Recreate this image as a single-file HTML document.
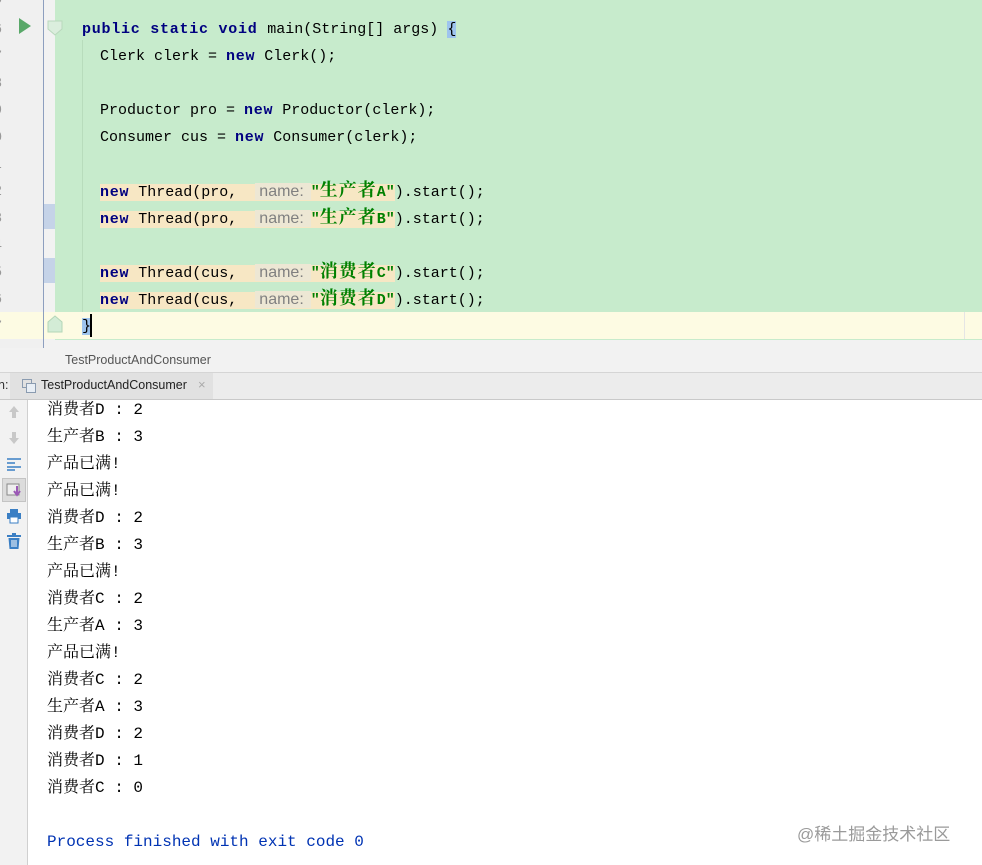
<!DOCTYPE html>
<html><head><meta charset="utf-8"><style>
*{margin:0;padding:0;box-sizing:border-box}
body{width:982px;height:865px;overflow:hidden;background:#fff;position:relative;font-family:"Liberation Mono","Noto Serif CJK SC",monospace}
.a{position:absolute}
.code{font-size:15px;line-height:27px;white-space:pre;color:#000}
.k{color:#000080;font-weight:bold;letter-spacing:0.75px}
.h{background:#f7e7c4}
.n{font-family:"Liberation Sans",sans-serif;color:#808080;background:#ede7d4;font-size:16px;padding:0 7px 0 4px}
.s{color:#008000;font-weight:bold;font-family:"Liberation Mono","Noto Serif CJK SC",monospace}
.s i{font-style:normal;font-size:18px;letter-spacing:1px}
.ln{font-family:"Liberation Sans",sans-serif;font-size:14px;color:#999;left:-6px;width:12px}
.con{font-size:16px;line-height:27px;white-space:pre;color:#000;font-family:"Liberation Mono","Noto Serif CJK SC",monospace}
</style></head><body>
<div class="a" style="left:0;top:0;width:43px;height:348px;background:#f0f0f0"></div>
<div class="a" style="left:43px;top:0;width:1px;height:348px;background:#8d9fbf"></div>
<div class="a" style="left:44px;top:0;width:11px;height:348px;background:#f2f2f2"></div>
<div class="a" style="left:55px;top:0;width:927px;height:340px;background:#c7ebcc"></div>
<div class="a" style="left:55px;top:340px;width:927px;height:8px;background:#f2f2f2"></div>
<div class="a" style="left:44px;top:204px;width:11px;height:25px;background:#c5d3e8"></div>
<div class="a" style="left:44px;top:258px;width:11px;height:25px;background:#c5d3e8"></div>
<div class="a" style="left:55px;top:312px;width:927px;height:27px;background:#fdfbe3"></div>
<div class="a" style="left:964px;top:312px;width:1px;height:27px;background:#e5e5e5"></div>
<div class="a" style="left:0;top:312px;width:55px;height:27px;background:#fdfbe3"></div>
<div class="a" style="left:43px;top:312px;width:1px;height:27px;background:#8d9fbf"></div>
<svg class="a" style="left:18px;top:17px" width="14" height="18"><path d="M1 1 L13 9 L1 17Z" fill="#59a869"/></svg>
<svg class="a" style="left:47px;top:20px" width="16" height="16"><path d="M1 1 H15 V9 L8 15 L1 9Z" fill="#dbeedd" stroke="#b9d8bd"/></svg>
<svg class="a" style="left:47px;top:315px" width="16" height="18"><path d="M1 17 H15 V7 L8 1 L1 7Z" fill="#d3ecd6" stroke="#b3d6b7"/></svg>
<div class="a" style="left:82px;top:40px;width:1px;height:272px;background:#b8dcbc"></div>
<div class="a ln" style="top:-10px">5</div>
<div class="a ln" style="top:20px">6</div><div class="a ln" style="top:47px">7</div><div class="a ln" style="top:74px">8</div><div class="a ln" style="top:101px">9</div><div class="a ln" style="top:128px">0</div><div class="a ln" style="top:155px">1</div><div class="a ln" style="top:182px">2</div><div class="a ln" style="top:209px">3</div><div class="a ln" style="top:236px">4</div><div class="a ln" style="top:263px">5</div><div class="a ln" style="top:290px">6</div><div class="a ln" style="top:317px">7</div>
<div class="a code" style="left:82px;top:16px"><span class="k">public static void </span>main(String[] args) <span style="background:#9ec4ee">{</span></div>
<div class="a code" style="left:100px;top:43px">Clerk clerk = <span class="k">new</span> Clerk();</div>
<div class="a code" style="left:100px;top:97px">Productor pro = <span class="k">new</span> Productor(clerk);</div>
<div class="a code" style="left:100px;top:124px">Consumer cus = <span class="k">new</span> Consumer(clerk);</div>
<div class="a code" style="left:100px;top:178px"><span class="h"><span class="k">new</span> Thread(pro,  <span class="n">name:</span><span class="s">"<i>生产者</i>A"</span></span>).start();</div>
<div class="a code" style="left:100px;top:205px"><span class="h"><span class="k">new</span> Thread(pro,  <span class="n">name:</span><span class="s">"<i>生产者</i>B"</span></span>).start();</div>
<div class="a code" style="left:100px;top:259px"><span class="h"><span class="k">new</span> Thread(cus,  <span class="n">name:</span><span class="s">"<i>消费者</i>C"</span></span>).start();</div>
<div class="a code" style="left:100px;top:286px"><span class="h"><span class="k">new</span> Thread(cus,  <span class="n">name:</span><span class="s">"<i>消费者</i>D"</span></span>).start();</div>
<div class="a code" style="left:82px;top:313px"><span style="background:#9ec4ee">}</span></div>
<div class="a" style="left:90px;top:314px;width:2px;height:23px;background:#000"></div>
<div class="a" style="left:0;top:348px;width:982px;height:25px;background:#f2f2f2;border-bottom:1px solid #d5d5d5"></div>
<div class="a" style="left:65px;top:353px;font:12.5px 'Liberation Sans',sans-serif;color:#555">TestProductAndConsumer</div>
<div class="a" style="left:0;top:373px;width:982px;height:27px;background:#ececec;border-bottom:1px solid #c9c9c9"></div>
<div class="a" style="left:10px;top:373px;width:203px;height:26px;background:#e1e1e1"></div>
<div class="a" style="left:-2px;top:378px;font:12.5px 'Liberation Sans',sans-serif;color:#333">n:</div>
<svg class="a" style="left:22px;top:379px" width="14" height="14"><rect x="0.5" y="0.5" width="9" height="8" fill="none" stroke="#8a9bb0"/><rect x="4.5" y="4.5" width="9" height="9" fill="#e8eef5" stroke="#8a9bb0"/></svg>
<div class="a" style="left:41px;top:378px;font:12.5px 'Liberation Sans',sans-serif;color:#222">TestProductAndConsumer</div>
<div class="a" style="left:198px;top:377px;font:13px 'Liberation Sans',sans-serif;color:#aaa">×</div>
<div class="a" style="left:0;top:400px;width:28px;height:465px;background:#f2f2f2;border-right:1px solid #d0d0d0"></div>
<svg class="a" style="left:7px;top:405px" width="14" height="14"><path d="M7 1 L12 7 H9 V13 H5 V7 H2Z" fill="#c8c8c8"/></svg>
<svg class="a" style="left:7px;top:431px" width="14" height="14"><path d="M7 13 L12 7 H9 V1 H5 V7 H2Z" fill="#c8c8c8"/></svg>
<svg class="a" style="left:6px;top:457px" width="16" height="14"><path d="M1 2H15M1 6H9M1 10H15M1 13H9" stroke="#3b7fc4" stroke-width="1.6"/></svg>
<div class="a" style="left:2px;top:478px;width:24px;height:24px;background:#dcdcdc;border:1px solid #c4c4c4"></div>
<svg class="a" style="left:6px;top:482px" width="16" height="16"><rect x="1" y="2" width="12" height="11" fill="#eee" stroke="#888"/><path d="M11 4V12M8 9L11 13L14 9" stroke="#9b59b6" stroke-width="2" fill="none"/></svg>
<svg class="a" style="left:6px;top:508px" width="16" height="16"><rect x="4" y="1" width="8" height="4" fill="#3b7fc4"/><rect x="1" y="5" width="14" height="6" fill="#3b7fc4"/><rect x="4" y="9" width="8" height="6" fill="#fff" stroke="#3b7fc4"/></svg>
<svg class="a" style="left:6px;top:533px" width="16" height="17"><rect x="1" y="2" width="14" height="2" fill="#3b7fc4"/><rect x="6" y="0" width="4" height="2" fill="#3b7fc4"/><path d="M2.5 5H13.5L12.5 16H3.5Z" fill="#3b7fc4"/><path d="M6 7V14M8 7V14M10 7V14" stroke="#fff"/></svg>
<div class="a con" style="left:47px;top:397px">消费者D : 2
生产者B : 3
产品已满!
产品已满!
消费者D : 2
生产者B : 3
产品已满!
消费者C : 2
生产者A : 3
产品已满!
消费者C : 2
生产者A : 3
消费者D : 2
消费者D : 1
消费者C : 0

<span style="color:#0033b3">Process finished with exit code 0</span></div>
<div class="a" style="left:797px;top:820px;font:17px 'Liberation Sans','Noto Sans CJK SC',sans-serif;color:#9a9a9a">@稀土掘金技术社区</div>
</body></html>
